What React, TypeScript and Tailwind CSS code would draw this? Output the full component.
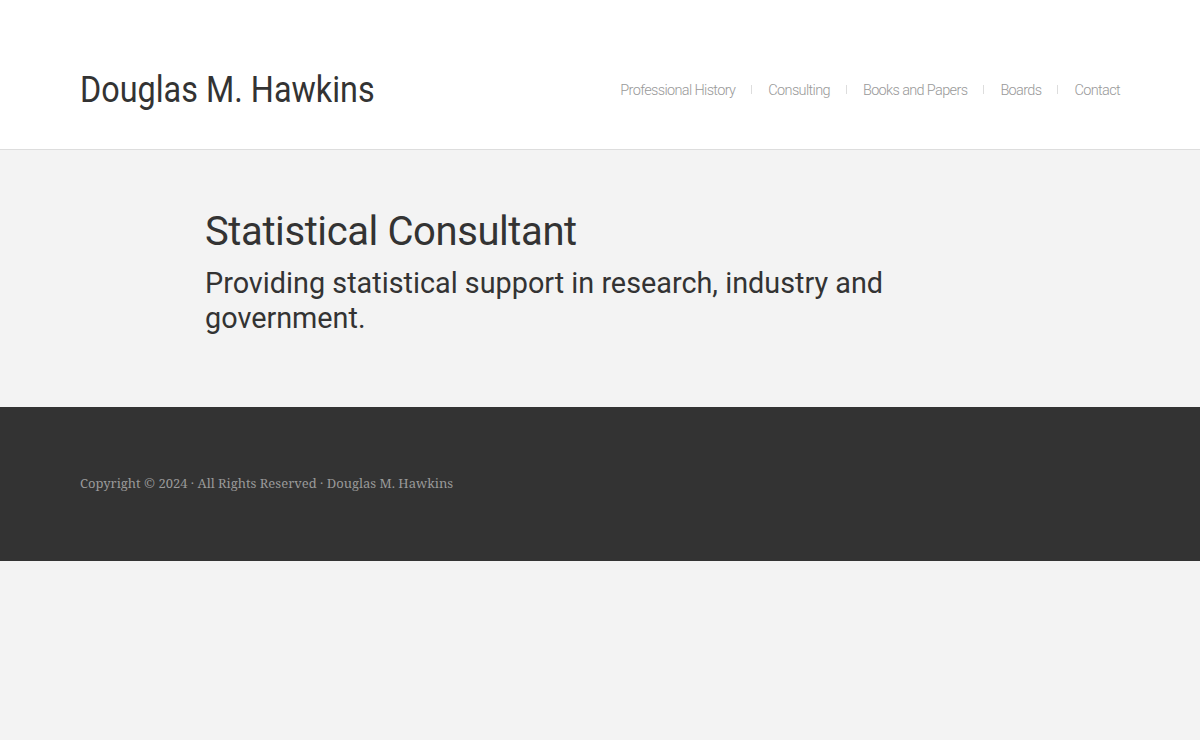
import React from "react";

const nav = ["Professional History", "Consulting", "Books and Papers", "Boards", "Contact"];

export default function App() {
  return (
    <div className="min-h-[740px] bg-[#f3f3f3]" style={{ fontFamily: "Roboto, 'Noto Sans', sans-serif" }}>
      <header className="h-[150px] bg-white border-b border-[#dddddd] flex items-center justify-between px-[80px] pt-[30px]">
        <div className="text-[37px] text-[#333333] scale-x-[0.875] origin-left whitespace-nowrap">
          Douglas M. Hawkins
        </div>
        <nav className="flex items-center mt-[3px]">
          {nav.map((n, i) => (
            <div key={n} className="flex items-center">
              {i > 0 && <span className="w-px h-[9px] bg-[#dddddd] mx-[16px] -mt-[4px]" />}
              <span className="text-[14.5px] text-[#999999] font-light tracking-[-0.65px] whitespace-nowrap">{n}</span>
            </div>
          ))}
        </nav>
      </header>
      <main className="bg-[#f3f3f3] h-[257px] pl-[205px] pt-[58px]">
        <h1 className="text-[40px] leading-[48px] text-[#333333] tracking-[-0.4px]">Statistical Consultant</h1>
        <p className="text-[28.8px] leading-[35px] text-[#333333] w-[720px] mt-[10px]">
          Providing statistical support in research, industry and government.
        </p>
      </main>
      <footer className="bg-[#333333] h-[154px] flex items-center px-[80px]">
        <p className="text-[13px] text-[#999999]" style={{ fontFamily: "'Noto Serif', 'DejaVu Serif', serif" }}>
          Copyright © 2024 · All Rights Reserved · Douglas M. Hawkins
        </p>
      </footer>
    </div>
  );
}
